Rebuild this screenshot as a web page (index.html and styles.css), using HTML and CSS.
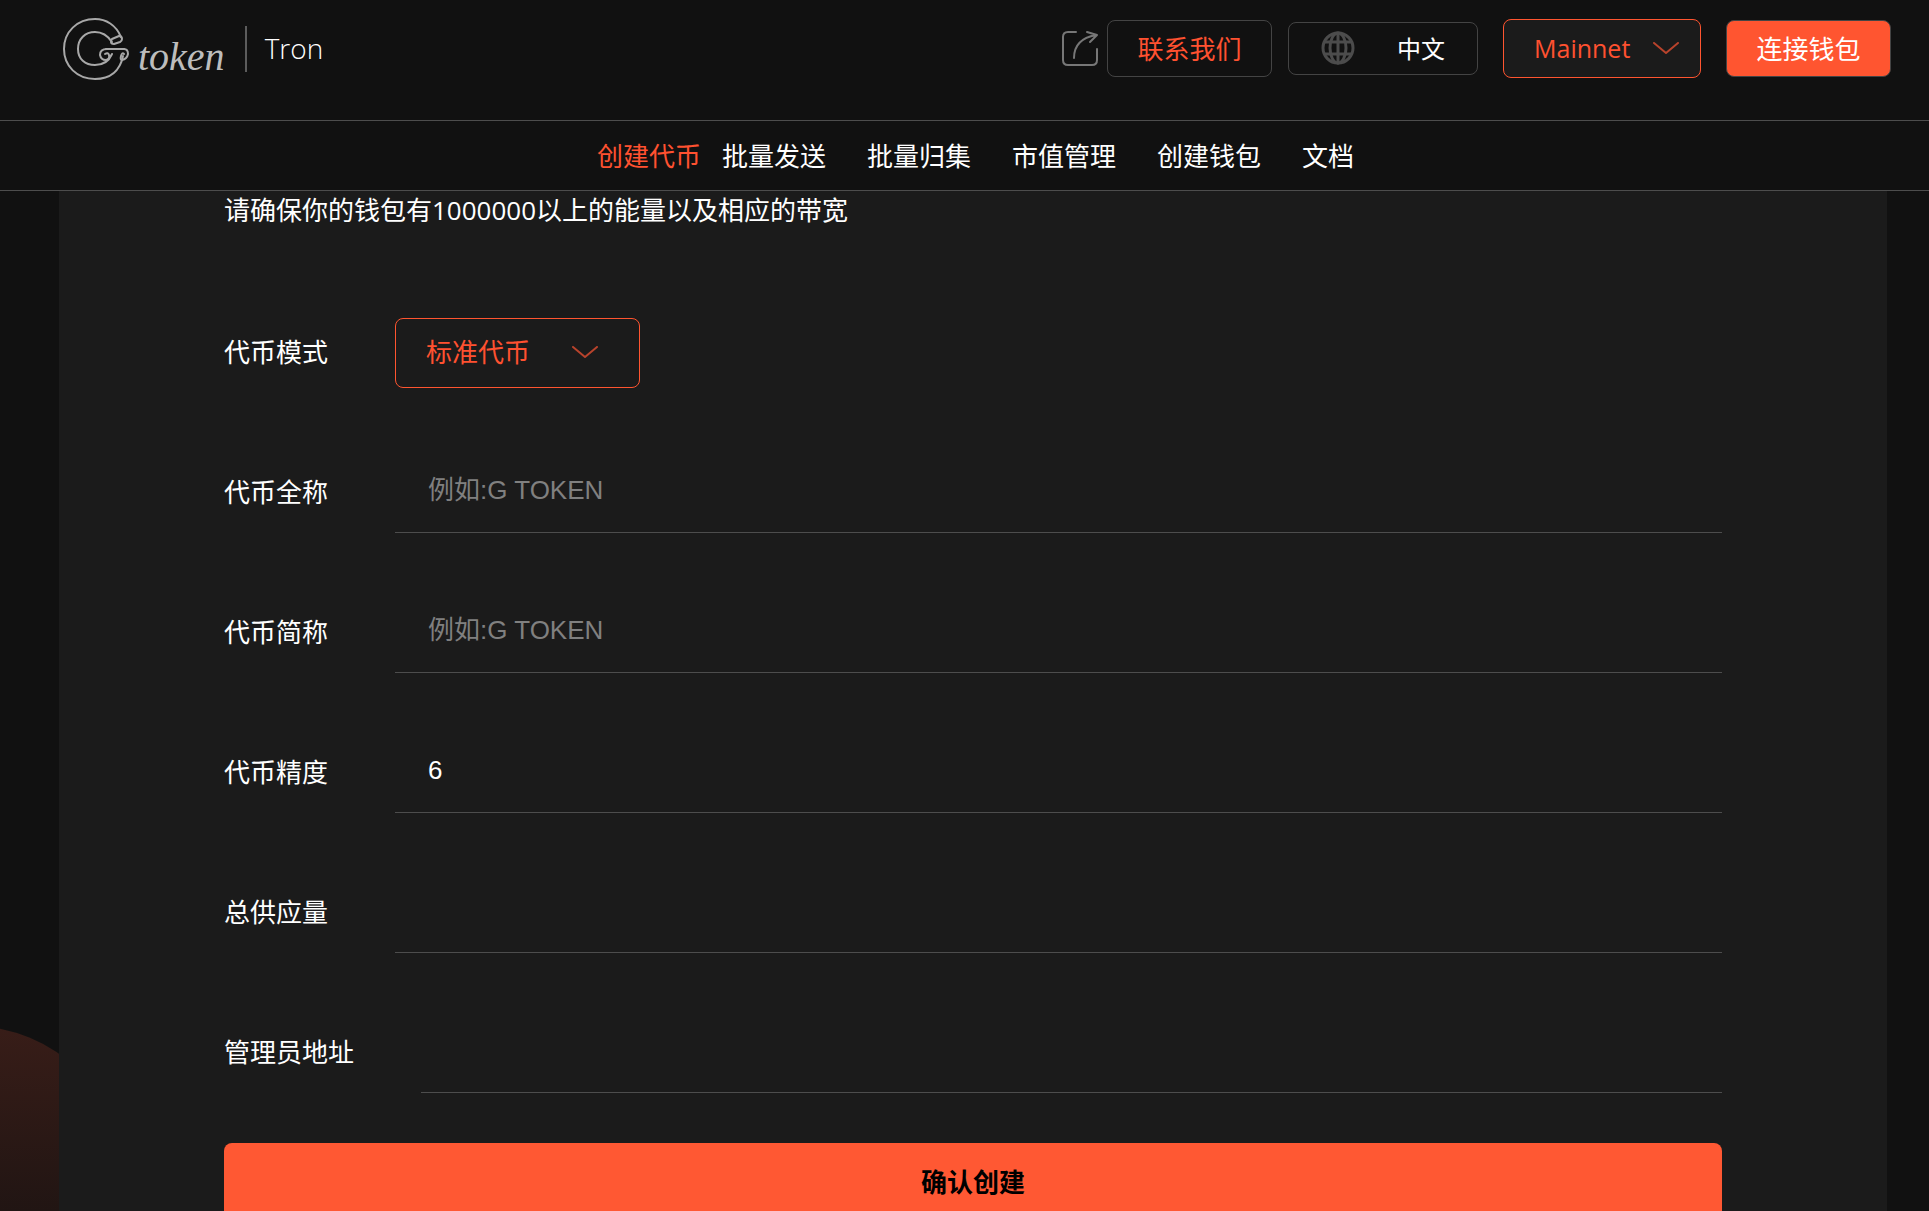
FILE: index.html
```html
<!DOCTYPE html>
<html lang="zh-CN">
<head>
    <meta charset="UTF-8">
    <meta name="viewport" content="width=device-width, initial-scale=1">
    <title>G token - Tron</title>
    <link rel="stylesheet" href="styles.css">
</head>
<body>

    <div class="bg-circle"></div>

    <header class="header">
        <div class="header-top">
            <a class="brand" href="#">
                <svg class="logo" viewBox="0 0 66 62" aria-hidden="true">
                    <path d="M58 19 C53 7 43 1 32 1 C14 1 1 14 1 31 C1 48 14 61 32 61 C47 61 57 53 60 38" />
                    <path d="M49 24 C45 18 39 14 32 14 C22 14 15 21 15 31 C15 41 22 47 32 47 C40 47 46 43 49 36" />
                    <path d="M49 21 L56 18 Q59 18 59 21 Q59 23 57 24 L51 26 Q48 26 48 24 Q48 22 49 21 Z" />
                    <path d="M43 31 L61 31 Q65 31 65 36 Q64 41 59 42 Q57 42 58 38 Q59 34 61 36" />
                    <path d="M61 31 L44 31 Q37 31 37 37 Q38 42 43 42 Q47 41 46 37 Q45 34 42 36" />
                </svg>
                <span class="logo-text">token</span>
                <span class="chain">Tron</span>
            </a>

            <div class="actions">
                <a class="share" href="#" aria-label="分享">
                    <svg viewBox="0 0 38 38" aria-hidden="true">
                        <path d="M15 2 H7 Q2 2 2 7 V30 Q2 35 7 35 H31 Q36 35 36 30 V19" />
                        <path d="M13 28 Q13 9 35 5 M26 2 L36 5 L29 12" />
                    </svg>
                </a>
                <button class="btn contact" type="button">联系我们</button>
                <button class="btn lang" type="button">
                    <svg viewBox="0 0 34 34" aria-hidden="true">
                        <circle cx="17" cy="17" r="15" />
                        <ellipse cx="17" cy="17" rx="8" ry="15" />
                        <path d="M17 2 V32 M4 11 H30 M4 23 H30" />
                    </svg>
                    <span>中文</span>
                </button>
                <div class="select-box network">
                    <select aria-label="网络">
                        <option>Mainnet</option>
                        <option>Nile</option>
                    </select>
                    <svg class="arrow" viewBox="0 0 26 12" aria-hidden="true"><path d="M1 1 L13 11 L25 1" /></svg>
                </div>
                <button class="btn wallet" type="button">连接钱包</button>
            </div>
        </div>

        <nav class="nav">
            <a class="active" href="#">创建代币</a>
            <a href="#">批量发送</a>
            <a href="#">批量归集</a>
            <a href="#">市值管理</a>
            <a href="#">创建钱包</a>
            <a href="#">文档</a>
        </nav>
    </header>

    <main class="panel">
        <p class="tip">请确保你的钱包有1000000以上的能量以及相应的带宽</p>

        <form class="form">
            <div class="row">
                <label for="mode">代币模式</label>
                <div class="select-box mode">
                    <select id="mode">
                        <option>标准代币</option>
                    </select>
                    <svg class="arrow" viewBox="0 0 26 12" aria-hidden="true"><path d="M1 1 L13 11 L25 1" /></svg>
                </div>
            </div>
            <div class="row">
                <label for="name">代币全称</label>
                <input id="name" type="text" placeholder="例如:G TOKEN">
            </div>
            <div class="row">
                <label for="symbol">代币简称</label>
                <input id="symbol" type="text" placeholder="例如:G TOKEN">
            </div>
            <div class="row">
                <label for="decimals">代币精度</label>
                <input id="decimals" type="text" value="6">
            </div>
            <div class="row">
                <label for="supply">总供应量</label>
                <input id="supply" type="text">
            </div>
            <div class="row">
                <label for="owner">管理员地址</label>
                <input id="owner" type="text">
            </div>
            <button class="submit" type="button">确认创建</button>
        </form>
    </main>

</body>
</html>
```
FILE: styles.css
```css
* {
    box-sizing: border-box;
}

body {
    margin: 0;
    height: 100vh;
    overflow: hidden;
    position: relative;
    background-color: #111111;
    color: #ffffff;
    font-family: "Open Sans", "Noto Sans CJK SC", sans-serif;
    font-size: 26px;
}

a {
    color: inherit;
    text-decoration: none;
}

button, select, input {
    font-family: inherit;
    font-size: inherit;
    color: inherit;
}

svg {
    display: block;
    fill: none;
    stroke-linecap: round;
    stroke-linejoin: round;
}

/* background decoration behind the panel */
.bg-circle {
    position: absolute;
    left: -183px;
    bottom: -123px;
    width: 308px;
    height: 308px;
    border-radius: 50%;
    background: linear-gradient(#381d18, #211513 60%);
}

.header {
    position: relative;
    background-color: #111111;
}

.header-top {
    display: flex;
    align-items: center;
    justify-content: space-between;
    height: 120px;
    padding: 0 38px 23px 63px;
}

.brand {
    display: flex;
    align-items: center;
}

.logo {
    width: 66px;
    height: 62px;
    stroke: #a8a8a8;
    stroke-width: 2;
}

.logo-text {
    margin-left: 9px;
    padding-top: 16px;
    font-family: "Liberation Serif", serif;
    font-style: italic;
    font-size: 40px;
    line-height: 40px;
    color: #bdbdbd;
}

.chain {
    margin-left: 20px;
    padding: 0 0 2px 18px;
    border-left: 2px solid #5c5c5c;
    font-size: 28px;
    font-weight: 300;
    line-height: 44px;
}

.actions {
    display: flex;
    align-items: center;
}

.share svg {
    width: 38px;
    height: 38px;
    stroke: #777777;
    stroke-width: 2;
}

.btn {
    height: 57px;
    padding: 0 0 2px;
    border: 1px solid #444444;
    border-radius: 8px;
    background-color: transparent;
    cursor: pointer;
}

.contact {
    width: 165px;
    margin-left: 8px;
    color: #ff5130;
}

.lang {
    display: flex;
    align-items: center;
    justify-content: space-between;
    width: 190px;
    height: 53px;
    margin-left: 16px;
    padding: 0 32px 2px;
    font-size: 24px;
}

.lang svg {
    width: 34px;
    height: 34px;
    stroke: #4c4c4c;
    stroke-width: 3;
}

.wallet {
    width: 165px;
    margin-left: 25px;
    background-color: #ff5530;
}

.select-box {
    position: relative;
    color: #ff5130;
}

.select-box select {
    width: 100%;
    height: 100%;
    padding: 0 30px 2px;
    border: 1px solid #ff5530;
    border-radius: 8px;
    background-color: #1b1b1b;
    appearance: none;
    cursor: pointer;
}

.arrow {
    position: absolute;
    top: 50%;
    right: 22px;
    width: 26px;
    height: 12px;
    margin-top: -7px;
    stroke: #b8432c;
    stroke-width: 2;
    pointer-events: none;
}

.network {
    width: 198px;
    height: 59px;
    margin-left: 25px;
    font-size: 25px;
}

.nav {
    display: flex;
    align-items: center;
    justify-content: center;
    gap: 41px;
    height: 71px;
    padding: 0 0 2px 22px;
    border-top: 1px solid #4d4d4d;
    border-bottom: 1px solid #4d4d4d;
}

.nav .active {
    margin-right: -20px;
    color: #ff5130;
}

.panel {
    position: relative;
    margin: 0 42px 0 59px;
    padding: 0 165px 60px;
    background-color: #1b1b1b;
}

.tip {
    margin: 0 0 84px;
    line-height: 38px;
}

.form {
    display: flex;
    flex-direction: column;
    gap: 60px;
}

.row {
    display: flex;
    align-items: center;
    gap: 67px;
    height: 80px;
}

.row label {
    flex: none;
    padding-bottom: 4px;
}

.row input {
    flex: 1;
    min-width: 0;
    height: 80px;
    padding: 0 33px 4px;
    border: none;
    border-bottom: 1px solid #4d4d4d;
    background-color: transparent;
    outline: none;
    font-family: "Liberation Sans", "Noto Sans CJK SC", sans-serif;
}

.row input::placeholder {
    color: #808080;
}

.mode {
    width: 245px;
    height: 70px;
}

.mode .arrow {
    right: 42px;
}

.submit {
    height: 76px;
    margin-top: -10px;
    border: none;
    border-radius: 8px;
    background-color: #ff5833;
    color: #000000;
    font-weight: bold;
    cursor: pointer;
}
```
